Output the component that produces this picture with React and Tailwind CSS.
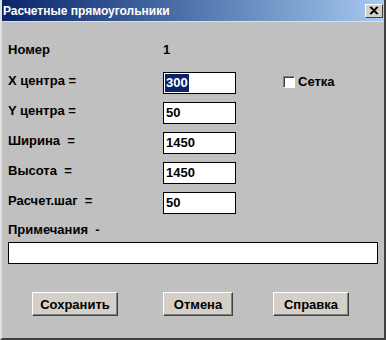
import React from 'react';

const fields = [
  { label: 'X центра =', value: '300', selected: true },
  { label: 'Y центра =', value: '50' },
  { label: 'Ширина  =', value: '1450' },
  { label: 'Высота  =', value: '1450' },
  { label: 'Расчет.шаг  =', value: '50' },
];

const Btn = ({ children, w }) => (
  <button
    className={`${w} h-[24px] bg-[#d4d0c8] border border-t-white border-l-white border-r-[#404040] border-b-[#404040] shadow-[inset_-1px_-1px_#808080] text-[13px] font-bold text-black leading-none`}
  >
    {children}
  </button>
);

const App = () => {
  return (
    <div
      className="w-[386px] h-[340px] bg-[#c0c0c0] flex flex-col border-l-2 border-l-[#dfdfdf] border-r-2 border-r-[#404040] border-b-2 border-b-[#404040] overflow-hidden"
      style={{ fontFamily: '"Liberation Sans", Arial, sans-serif' }}
    >
      {/* title bar */}
      <div className="h-[21px] shrink-0 flex items-center justify-between pl-[1px] pr-[1px] bg-linear-to-r from-[#0a246a] to-[#a6caf0]">
        <span className="text-white text-[12px] font-bold">Расчетные прямоугольники</span>
        <div className="w-[18px] h-[14px] bg-[#d4d0c8] border border-t-white border-l-white border-r-[#404040] border-b-[#404040] flex items-center justify-center">
          <svg width="10" height="9" viewBox="0 0 10 9">
            <path d="M1 1 L8 8 M8 1 L1 8 M2 1 L9 8 M9 1 L2 8" stroke="#000" strokeWidth="1.2" />
          </svg>
        </div>
      </div>
      <div className="h-[1px] bg-[#dfdfdf] shrink-0" />

      <div className="flex flex-col pt-[16px] pl-[6px] text-[13px] font-bold text-black">
        <div className="flex h-[30px] items-center">
          <span className="w-[155px] pb-[6px]">Номер</span>
          <span className="pb-[6px]">1</span>
        </div>

        {fields.map((f, i) => (
          <div key={i} className="flex h-[30px] items-center">
            <span className="w-[155px] pb-[5px] whitespace-pre">{f.label}</span>
            <div className="w-[73px] h-[22px] bg-white border border-black flex items-center pl-[1px]">
              {f.selected ? (
                <span className="bg-[#0a246a] text-white px-[1px] leading-[18px]">{f.value}</span>
              ) : (
                <span className="px-[1px]">{f.value}</span>
              )}
            </div>
            {i === 0 && (
              <div className="flex items-center ml-[47px] pb-[2px]">
                <div className="w-[12px] h-[12px] bg-white border border-t-[#808080] border-l-[#808080] border-r-white border-b-white shadow-[inset_1px_1px_#404040]" />
                <span className="ml-[3px]">Сетка</span>
              </div>
            )}
          </div>
        ))}

        <div className="flex h-[24px] items-center">
          <span className="whitespace-pre">Примечания  -</span>
        </div>
        <div className="w-[370px] h-[22px] bg-white border border-black" />

        <div className="flex mt-[28px] pl-[24px]">
          <Btn w="w-[86px]">Сохранить</Btn>
          <div className="ml-[45px]">
            <Btn w="w-[70px]">Отмена</Btn>
          </div>
          <div className="ml-[40px]">
            <Btn w="w-[76px]">Справка</Btn>
          </div>
        </div>
      </div>
    </div>
  );
};

export default App;
